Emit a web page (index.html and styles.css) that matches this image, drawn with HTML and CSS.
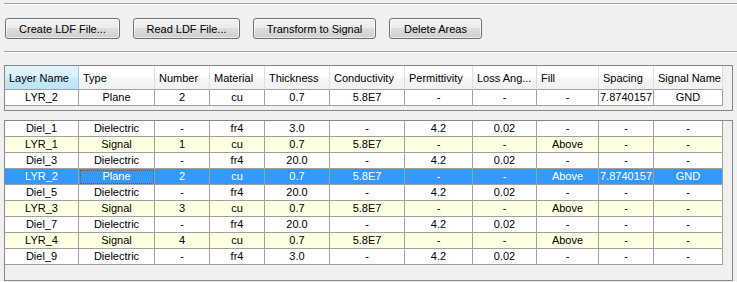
FILE: index.html
```html
<!DOCTYPE html>
<html lang="en">
<head>
    <meta charset="UTF-8">
    <title>Layer Stackup</title>
    <link rel="stylesheet" href="styles.css">
</head>
<body>
    <div class="rule"></div>
    <div class="toolbar">
        <button class="btn btn-create">Create LDF File...</button>
        <button class="btn btn-read">Read LDF File...</button>
        <button class="btn btn-transform">Transform to Signal</button>
        <button class="btn btn-delete">Delete Areas</button>
    </div>
    <div class="rule rule-lower"></div>

    <div class="list list-current">
        <div class="row head">
            <span class="sorted">Layer Name</span><span>Type</span><span>Number</span><span>Material</span><span>Thickness</span><span>Conductivity</span><span>Permittivity</span><span>Loss Ang...</span><span>Fill</span><span>Spacing</span><span>Signal Name</span>
        </div>
        <div class="row">
            <span>LYR_2</span><span>Plane</span><span>2</span><span>cu</span><span>0.7</span><span>5.8E7</span><span>-</span><span>-</span><span>-</span><span>7.8740157</span><span>GND</span>
        </div>
    </div>

    <div class="list list-layers">
        <div class="row">
            <span>Diel_1</span><span>Dielectric</span><span>-</span><span>fr4</span><span>3.0</span><span>-</span><span>4.2</span><span>0.02</span><span>-</span><span>-</span><span>-</span>
        </div>
        <div class="row alt">
            <span>LYR_1</span><span>Signal</span><span>1</span><span>cu</span><span>0.7</span><span>5.8E7</span><span>-</span><span>-</span><span>Above</span><span>-</span><span>-</span>
        </div>
        <div class="row">
            <span>Diel_3</span><span>Dielectric</span><span>-</span><span>fr4</span><span>20.0</span><span>-</span><span>4.2</span><span>0.02</span><span>-</span><span>-</span><span>-</span>
        </div>
        <div class="row selected">
            <span>LYR_2</span><span class="focus">Plane</span><span>2</span><span>cu</span><span>0.7</span><span>5.8E7</span><span>-</span><span>-</span><span>Above</span><span>7.8740157</span><span>GND</span>
        </div>
        <div class="row">
            <span>Diel_5</span><span>Dielectric</span><span>-</span><span>fr4</span><span>20.0</span><span>-</span><span>4.2</span><span>0.02</span><span>-</span><span>-</span><span>-</span>
        </div>
        <div class="row alt">
            <span>LYR_3</span><span>Signal</span><span>3</span><span>cu</span><span>0.7</span><span>5.8E7</span><span>-</span><span>-</span><span>Above</span><span>-</span><span>-</span>
        </div>
        <div class="row">
            <span>Diel_7</span><span>Dielectric</span><span>-</span><span>fr4</span><span>20.0</span><span>-</span><span>4.2</span><span>0.02</span><span>-</span><span>-</span><span>-</span>
        </div>
        <div class="row alt">
            <span>LYR_4</span><span>Signal</span><span>4</span><span>cu</span><span>0.7</span><span>5.8E7</span><span>-</span><span>-</span><span>Above</span><span>-</span><span>-</span>
        </div>
        <div class="row">
            <span>Diel_9</span><span>Dielectric</span><span>-</span><span>fr4</span><span>3.0</span><span>-</span><span>4.2</span><span>0.02</span><span>-</span><span>-</span><span>-</span>
        </div>
    </div>
</body>
</html>
```

FILE: styles.css
```css
body {
    margin: 0;
    background-color: #f0f0f0;
    color: #000;
    font-family: "Liberation Sans", Arial, sans-serif;
    font-size: 11px;
}
.rule {
    margin: 3px 0 0 4px;
    border-top: 1px solid #a0a0a0;
    border-bottom: 1px solid #fff;
}
.rule-lower {
    margin-top: 12px;
}
.toolbar {
    display: flex;
    gap: 13px;
    padding: 13px 0 0 5px;
}
.btn {
    height: 21px;
    padding: 0;
    font-family: inherit;
    font-size: 11px;
    color: #000;
    border: 1px solid #707070;
    border-radius: 3px;
    background: linear-gradient(#f2f2f2 0%, #ebebeb 50%, #dddddd 50%, #cfcfcf 100%);
    box-shadow: inset 0 0 0 1px rgba(255, 255, 255, 0.6);
}
.btn-create { width: 115px; }
.btn-read { width: 107px; }
.btn-transform { width: 123px; }
.btn-delete { width: 93px; }

.list {
    box-sizing: border-box;
    width: 729px;
    margin-left: 4px;
    border: 1px solid #828790;
    background-color: #f0f0f0;
}
.list-current {
    height: 46px;
    margin-top: 12px;
}
.list-layers {
    height: 161px;
    margin-top: 9px;
}
.row {
    display: grid;
    grid-template-columns: 74px 76px 55px 55px 65px 75px 68px 64px 62px 55px 69px;
    height: 16px;
    background-color: #fff;
    width: 718px;
}
.row span {
    box-sizing: border-box;
    border-right: 1px solid #a0a0a0;
    border-bottom: 1px solid #a0a0a0;
    text-align: center;
    line-height: 15px;
    white-space: nowrap;
    overflow: hidden;
}
.row.alt {
    background-color: #ffffe1;
}
.row.selected {
    background-color: #3399ff;
    color: #fff;
}
.row .focus {
    outline: 1px dotted #6b5a3e;
    outline-offset: -2px;
}

.row.head {
    height: 24px;
    background: linear-gradient(#ffffff 0%, #ffffff 45%, #f4f5f7 55%, #f0f1f3 100%);
}
.row.head span {
    text-align: left;
    padding: 2px 0 0 4px;
    line-height: 21px;
    border-right-color: #dcdfe3;
}
.row.head .sorted {
    background: linear-gradient(#e3f4fc 0%, #d9f0fb 45%, #c6e8f9 55%, #bde4f7 100%);
    border-right-color: #94cbe6;
}
```
